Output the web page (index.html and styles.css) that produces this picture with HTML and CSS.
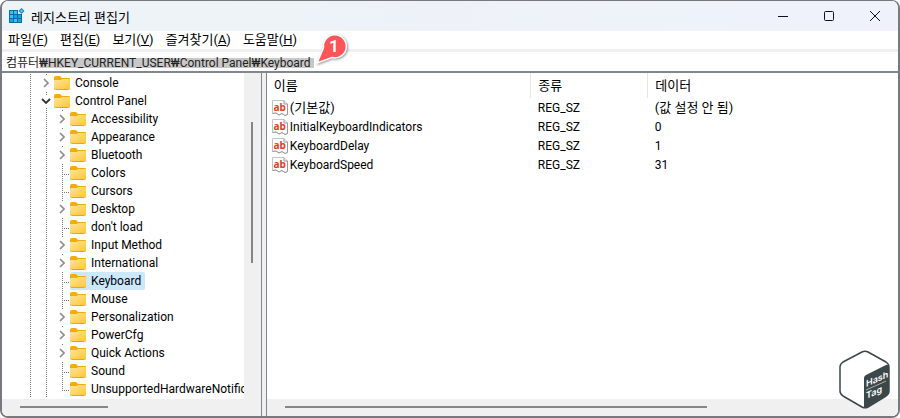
FILE: index.html
```
<!DOCTYPE html>
<html lang="ko">
<head>
  <meta charset="UTF-8">
  <meta name="viewport" content="width=device-width, initial-scale=1.0">
  <title>레지스트리 편집기</title>
  <link rel="stylesheet" href="styles.css">
</head>
<body>

<svg class="symbols" width="0" height="0">
  <symbol id="folder" viewBox="0 0 16 14">
    <path d="M0 2Q0 0 2 0H6L8 2H15Q16 2 16 3V6H0Z" fill="#f3ab10"/>
    <path d="M0 5Q0 4 1 4H7L8 3H15Q16 3 16 4V12Q16 13 15 13H1Q0 13 0 12Z" fill="url(#fold)"/>
    <path d="M0.500 12.500Q0.500 13.500 1.500 13.500H14.500Q15.500 13.500 15.500 12.500" fill="none" stroke="#e9a617"/>
  </symbol>
  <symbol id="right" viewBox="0 0 6 10">
    <path d="M1 1L5 5L1 9" fill="none" stroke="#8c8c8c" stroke-width="1.6"/>
  </symbol>
  <symbol id="down" viewBox="0 0 10 6">
    <path d="M1 1L5 5L9 1" fill="none" stroke="#333" stroke-width="1.8"/>
  </symbol>
  <symbol id="string" viewBox="0 0 16 16">
    <path d="M0.5 0.5H12L15.5 4V14.5L13 15.5L10 13.5L7 15L4 13L0.5 13.5Z" fill="#fff" stroke="#c4c4c4"/>
    <path d="M12 0.5V4H15.5V14.5L13 15.5L10 13.5L7 15L4 13L0.5 13.5" fill="none" stroke="#999"/>
    <text x="1.500" y="10.500" class="ab">ab</text>
  </symbol>
  <defs>
    <linearGradient id="fold" x1="0" y1="0" x2="1" y2="1">
      <stop offset="0" stop-color="#ffe59b"/>
      <stop offset="1" stop-color="#ffc736"/>
    </linearGradient>
  </defs>
</svg>

<div class="window">
  <header class="titlebar">
    <svg class="app-icon" width="16" height="16" viewBox="0 0 16 16">
      <path d="M0 2H9V6H13V15H0Z" fill="#0b6ca5"/>
      <path d="M1 3H4V6H1ZM5 3H8V6H5ZM1 7H4V10H1ZM5 11H8V14H5Z" fill="#35c3f3"/>
      <path d="M5 7H8V10H5ZM9 7H12V10H9ZM1 11H4V14H1ZM9 11H12V14H9Z" fill="#1ba1e2"/>
      <path d="M12.500 0L15.500 3L12.500 6L9.500 3Z" fill="#1485c0"/>
      <path d="M12.500 1.500L14 3L12.500 4.500L11 3Z" fill="#5dd0f7"/>
    </svg>
    <h1>레지스트리 편집기</h1>
    <div class="caption">
      <button aria-label="최소화"><svg width="12" height="12"><path d="M1 6.500H11"/></svg></button>
      <button aria-label="최대화"><svg width="12" height="12"><rect x="1.500" y="1.500" width="9" height="9" rx="1"/></svg></button>
      <button aria-label="닫기"><svg width="12" height="12"><path d="M1 1L11 11M11 1L1 11"/></svg></button>
    </div>
  </header>

  <nav class="menu">
    <button>파일(<u>F</u>)</button>
    <button>편집(<u>E</u>)</button>
    <button>보기(<u>V</u>)</button>
    <button>즐겨찾기(<u>A</u>)</button>
    <button>도움말(<u>H</u>)</button>
  </nav>

  <div class="address">
    <input type="text" aria-label="주소" value="컴퓨터₩HKEY_CURRENT_USER₩Control Panel₩Keyboard">
    <svg class="pin" width="36" height="36" viewBox="0 0 36 36">
      <path d="M3 31L9.500 16A11.500 11.500 0 1 1 18 25.500Z" fill="#ff5558" stroke="#fff" stroke-width="1.500"/>
      <text x="20" y="20">1</text>
    </svg>
  </div>

  <main class="panes">
    <section class="pane keys">
      <div class="view">
        <ul class="tree">
          <li><i></i><b><svg class="r"><use href="#right"/></svg></b><span><svg class="f"><use href="#folder"/></svg>Console</span></li>
          <li><i></i><b><svg class="d"><use href="#down"/></svg></b><span><svg class="f"><use href="#folder"/></svg>Control Panel</span></li>
          <li><i></i><i></i><b><svg class="r"><use href="#right"/></svg></b><span><svg class="f"><use href="#folder"/></svg>Accessibility</span></li>
          <li><i></i><i></i><b><svg class="r"><use href="#right"/></svg></b><span><svg class="f"><use href="#folder"/></svg>Appearance</span></li>
          <li><i></i><i></i><b><svg class="r"><use href="#right"/></svg></b><span><svg class="f"><use href="#folder"/></svg>Bluetooth</span></li>
          <li><i></i><i></i><i class="leaf"></i><span><svg class="f"><use href="#folder"/></svg>Colors</span></li>
          <li><i></i><i></i><i class="leaf"></i><span><svg class="f"><use href="#folder"/></svg>Cursors</span></li>
          <li><i></i><i></i><b><svg class="r"><use href="#right"/></svg></b><span><svg class="f"><use href="#folder"/></svg>Desktop</span></li>
          <li><i></i><i></i><i class="leaf"></i><span><svg class="f"><use href="#folder"/></svg>don't load</span></li>
          <li><i></i><i></i><b><svg class="r"><use href="#right"/></svg></b><span><svg class="f"><use href="#folder"/></svg>Input Method</span></li>
          <li><i></i><i></i><b><svg class="r"><use href="#right"/></svg></b><span><svg class="f"><use href="#folder"/></svg>International</span></li>
          <li><i></i><i></i><i class="leaf"></i><span class="selected"><svg class="f"><use href="#folder"/></svg>Keyboard</span></li>
          <li><i></i><i></i><i class="leaf"></i><span><svg class="f"><use href="#folder"/></svg>Mouse</span></li>
          <li><i></i><i></i><b><svg class="r"><use href="#right"/></svg></b><span><svg class="f"><use href="#folder"/></svg>Personalization</span></li>
          <li><i></i><i></i><b><svg class="r"><use href="#right"/></svg></b><span><svg class="f"><use href="#folder"/></svg>PowerCfg</span></li>
          <li><i></i><i></i><b><svg class="r"><use href="#right"/></svg></b><span><svg class="f"><use href="#folder"/></svg>Quick Actions</span></li>
          <li><i></i><i></i><i class="leaf"></i><span><svg class="f"><use href="#folder"/></svg>Sound</span></li>
          <li><i></i><i></i><i class="leaf last"></i><span><svg class="f"><use href="#folder"/></svg>UnsupportedHardwareNotifications</span></li>
        </ul>
        <div class="vscroll"><div class="thumb"></div></div>
      </div>
      <div class="hscroll"><div class="thumb"></div></div>
    </section>

    <section class="pane values">
      <div class="view">
        <table>
          <thead>
            <tr><th class="name">이름</th><th class="type">종류</th><th>데이터</th></tr>
          </thead>
          <tbody>
            <tr class="default"><td><svg class="s"><use href="#string"/></svg>(기본값)</td><td class="kind">REG_SZ</td><td>(값 설정 안 됨)</td></tr>
            <tr><td><svg class="s"><use href="#string"/></svg>InitialKeyboardIndicators</td><td>REG_SZ</td><td>0</td></tr>
            <tr><td><svg class="s"><use href="#string"/></svg>KeyboardDelay</td><td>REG_SZ</td><td>1</td></tr>
            <tr><td><svg class="s"><use href="#string"/></svg>KeyboardSpeed</td><td>REG_SZ</td><td>31</td></tr>
          </tbody>
        </table>
      </div>
      <div class="hscroll"><div class="thumb"></div></div>
    </section>
  </main>

  <svg class="logo" width="52" height="60" viewBox="0 0 52 60">
    <path d="M23 2Q26 0.500 29 2L47 12Q50 14 50 17V41Q50 44 47 46L29 57Q26 58.500 23 57L4 46Q1 44 1 41V17Q1 14 4 12Z" fill="#fff" stroke="#3c474a" stroke-width="1.500"/>
    <path d="M25 58V28Q25 26 27 25L47 15Q50 14 50 17V41Q50 44 47 46L29 57Q27 58 25 58Z" fill="#3c474a"/>
    <g transform="translate(27 37) skewY(-24)">
      <text x="0" y="0">Hash</text>
      <path d="M0 3H20" stroke="#fff" stroke-width="0.500"/>
      <text x="0" y="12">Tag</text>
    </g>
  </svg>
</div>

</body>
</html>
```

FILE: styles.css
```
* {
  box-sizing: border-box;
}
body {
  margin: 0;
  font-family: Roboto, 'Noto Sans CJK KR', sans-serif;
  font-size: 13px;
  color: #000;
}
button, input {
  font: inherit;
  color: inherit;
  background: none;
  border: none;
  padding: 0;
}
.symbols {
  position: absolute;
}
.window {
  position: relative;
  display: flex;
  flex-direction: column;
  height: 100vh;
  border: 2px solid #76797d;
  border-top-width: 1px;
  border-radius: 8px;
  overflow: hidden;
  background: #fff;
}
.titlebar {
  display: flex;
  align-items: center;
  height: 30px;
  padding-left: 7px;
  background: linear-gradient(90deg, #edf3f7, #eff2fa);
}
.titlebar h1 {
  flex: 1;
  margin: 0 0 0 6px;
  font-size: 13px;
  font-weight: normal;
}
.caption {
  display: flex;
}
.caption button {
  width: 46px;
  height: 30px;
}
.caption svg {
  display: block;
  margin: auto;
  fill: none;
  stroke: #111;
}
.menu {
  display: flex;
  gap: 12px;
  height: 18px;
  padding-left: 6px;
}
.menu button {
  line-height: 18px;
}
.address {
  position: relative;
  height: 24px;
  border-top: 3px solid #f0f0f0;
  border-bottom: 2px solid #82878d;
}
.address input {
  display: block;
  width: 100%;
  height: 19px;
  padding-left: 4px;
  font-size: 12px;
  color: #222;
  background: linear-gradient(#c8c8c8, #c8c8c8) 38px 6px / 274px 10px no-repeat;
}
.pin {
  position: absolute;
  left: 312px;
  top: -20px;
  filter: drop-shadow(1px 1px 1px #999);
}
.pin text {
  font-size: 17px;
  font-weight: bold;
  text-anchor: middle;
  fill: #fff;
}
.panes {
  flex: 1;
  display: flex;
  min-height: 0;
  gap: 4px;
  background: #f0f0f0;
}
.pane {
  display: flex;
  flex-direction: column;
  background: #fff;
}
.keys {
  width: 29%;
  border-right: 1px solid #82878d;
}
.values {
  flex: 1;
  border-left: 1px solid #82878d;
}
.view {
  flex: 1;
  display: flex;
  min-height: 0;
}
.tree {
  flex: 1;
  min-width: 0;
  margin: 0;
  padding: 1px 0 0 20px;
  font-size: 12px;
  list-style: none;
  overflow: hidden;
}
.tree li {
  display: flex;
  height: 18px;
  line-height: 18px;
  white-space: nowrap;
}
.tree i, .tree b {
  flex: none;
  width: 16px;
  background: repeating-linear-gradient(#777 0 1px, #fff 1px 2px) 8px 0 / 1px 100% no-repeat;
}
.tree b {
  display: flex;
  align-items: center;
  justify-content: center;
}
.tree b svg {
  box-sizing: content-box;
  padding: 3px 0;
  background: #fff;
}
.tree .leaf {
  background:
    repeating-linear-gradient(#777 0 1px, transparent 1px 2px) 8px 0 / 1px 100% no-repeat,
    repeating-linear-gradient(90deg, #777 0 1px, transparent 1px 2px) 8px 10px / 8px 1px no-repeat;
}
.tree .last {
  background-size: 1px 10px, 8px 1px;
}
.tree span {
  display: flex;
  align-items: center;
  gap: 5px;
  padding: 0 4px 0 0;
}
.tree .selected {
  background: #cce8ff;
  border-radius: 2px;
}
.f {
  width: 16px;
  height: 14px;
}
.r {
  width: 6px;
  height: 10px;
}
.d {
  width: 10px;
  height: 6px;
}
.s {
  width: 16px;
  height: 16px;
  margin-right: 2px;
  vertical-align: middle;
}
.ab {
  font-family: 'Noto Sans', sans-serif;
  font-size: 10px;
  font-weight: bold;
  fill: #d8431f;
}
.vscroll {
  width: 17px;
  padding: 49px 8px 0 7px;
  background: #f0f0f0;
}
.vscroll .thumb {
  height: 141px;
  background: #868686;
}
.hscroll {
  height: 17px;
  padding: 7px 18px;
  background: #f0f0f0;
}
.hscroll .thumb {
  width: 88px;
  height: 2px;
  background: #868686;
}
.values .hscroll .thumb {
  width: 71%;
}
table {
  width: 100%;
  border-collapse: collapse;
  table-layout: fixed;
  align-self: flex-start;
}
th, td {
  height: 19px;
  padding: 0 0 0 7px;
  font-weight: normal;
  line-height: 18px;
  text-align: left;
}
th {
  height: 25px;
  border-right: 1px solid #e5e5e5;
}
th:last-child {
  border-right: none;
}
td {
  font-size: 12px;
}
td:first-child {
  padding-left: 5px;
}
.default td {
  font-size: 13px;
}
.default .kind {
  font-size: 12px;
}
.name {
  width: 264px;
}
.type {
  width: 117px;
}
.logo {
  position: absolute;
  right: 7px;
  bottom: 6px;
}
.logo text {
  font-family: Inter, sans-serif;
  font-size: 9px;
  font-weight: 600;
  fill: #fff;
}
```
